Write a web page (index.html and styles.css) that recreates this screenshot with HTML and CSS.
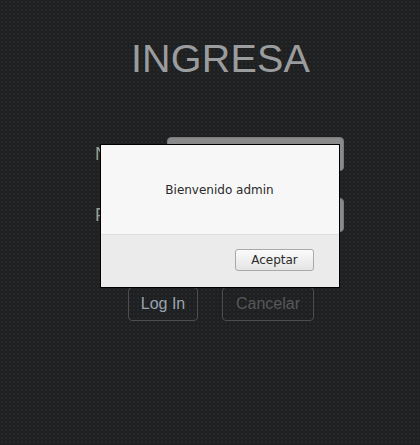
FILE: index.html
```html
<!DOCTYPE html>
<html lang="es">
<head>
<meta charset="utf-8">
<title>Ingresa</title>
<link rel="stylesheet" href="styles.css">
</head>
<body>
<main class="page">
  <h1 class="title">INGRESA</h1>
  <form class="form">
    <div class="row">
      <label class="label">Nombre</label>
      <input class="input" type="text">
    </div>
    <div class="row">
      <label class="label">Password</label>
      <input class="input" type="password">
    </div>
    <div class="actions">
      <button type="button" class="btn btn-login">Log In</button>
      <button type="button" class="btn btn-cancel">Cancelar</button>
    </div>
  </form>
</main>
<div class="dialog">
  <div class="dialog-body">Bienvenido admin</div>
  <div class="dialog-footer">
    <button type="button" class="dialog-btn">Aceptar</button>
  </div>
</div>
</body>
</html>
```
FILE: styles.css
```css
html, body {
  margin: 0;
  padding: 0;
}
body {
  width: 420px;
  height: 445px;
  overflow: hidden;
  position: relative;
  background-color: #1f2022;
  background-image: radial-gradient(circle, #27282a 0.8px, transparent 1.2px);
  background-size: 4px 4px;
  font-family: "Liberation Sans", Arial, sans-serif;
}
.page {
  display: flex;
  flex-direction: column;
  align-items: center;
  padding-top: 34px;
}
.title {
  margin: 0 0 0 21px;
  font-weight: normal;
  font-size: 39.5px;
  line-height: 48px;
  color: #9a9c9e;
  letter-spacing: 0.2px;
}
.form {
  margin-top: 55px;
  display: flex;
  flex-direction: column;
  width: 420px;
}
.row {
  display: flex;
  align-items: center;
  height: 34px;
  margin-bottom: 27px;
  padding-left: 95px;
}
.label {
  width: 72px;
  flex-shrink: 0;
  font-size: 18px;
  color: #9b9b8f;
  white-space: nowrap;
}
.input {
  position: relative;
  box-sizing: border-box;
  width: 177px;
  height: 34px;
  border: 1px solid #7a7a7a;
  border-radius: 4px;
  background: #8a8a8a;
  margin: 0;
}
.actions {
  display: flex;
  gap: 24px;
  padding-left: 128px;
  margin-top: 28px;
}
.btn {
  box-sizing: border-box;
  height: 34px;
  padding: 0;
  white-space: nowrap;
  background: transparent;
  border: 1px solid #4c4d4f;
  border-radius: 4px;
  font-family: "Liberation Sans", Arial, sans-serif;
  font-size: 16px;
}
.btn-login {
  width: 70px;
  color: #9aa4ae;
}
.btn-cancel {
  width: 92px;
  color: #56585a;
}
.dialog {
  position: absolute;
  left: 100px;
  top: 144px;
  width: 238px;
  border: 1px solid #000;
  background: #f7f7f7;
  font-family: "DejaVu Sans", sans-serif;
  font-size: 12px;
  color: #2a2a2a;
}
.dialog-body {
  height: 89px;
  display: flex;
  align-items: center;
  justify-content: center;
  padding-right: 1px;
  box-sizing: border-box;
}
.dialog-footer {
  height: 53px;
  border-top: 1px solid #dedede;
  background: #ebebeb;
  display: flex;
  justify-content: flex-end;
  align-items: flex-start;
  padding: 14px 25px 0 0;
  box-sizing: border-box;
}
.dialog-btn {
  box-sizing: border-box;
  width: 79px;
  height: 22px;
  border: 1px solid #a9a9a9;
  border-radius: 3px;
  background: linear-gradient(#fbfbfb, #e4e4e4);
  font-family: "DejaVu Sans", sans-serif;
  font-size: 12px;
  color: #2a2a2a;
  padding: 0;
}
```
